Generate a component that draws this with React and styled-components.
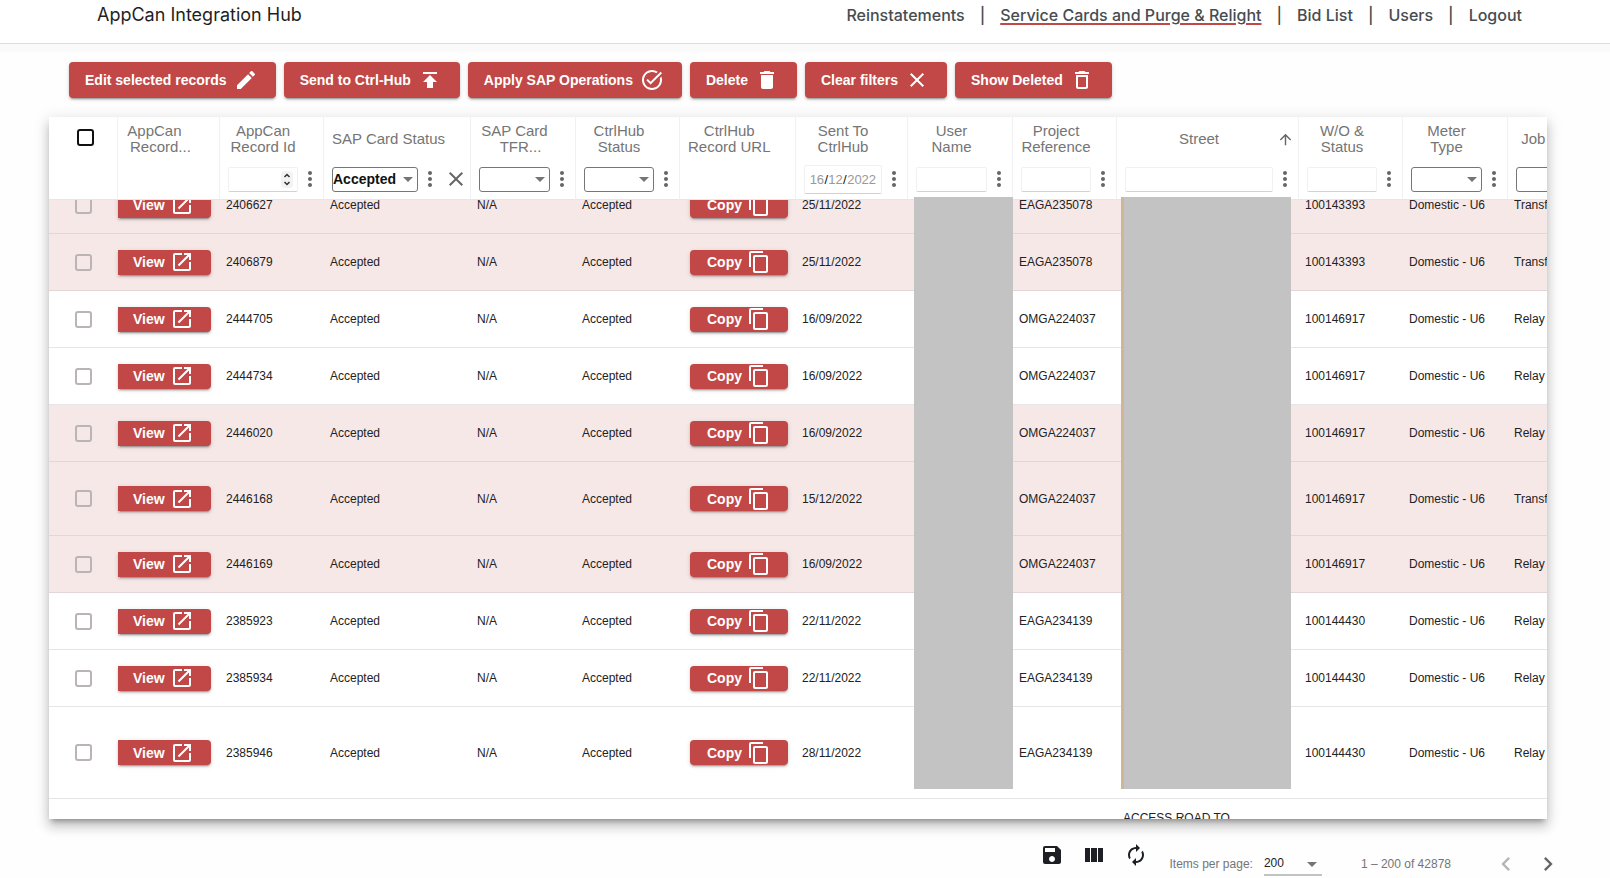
import React, { useLayoutEffect, useRef } from 'react';
import styled, { createGlobalStyle } from 'styled-components';
import {
  MdEdit,
  MdPublish,
  MdTaskAlt,
  MdDelete,
  MdClose,
  MdDeleteOutline,
  MdOpenInNew,
  MdContentCopy,
  MdMoreVert,
  MdArrowUpward,
  MdSave,
  MdAutorenew,
  MdChevronLeft,
  MdChevronRight,
} from 'react-icons/md';

const red = '#c14846';

const GlobalStyle = createGlobalStyle`
  *, *::before, *::after { box-sizing: border-box; }
  body {
    margin: 0;
    background: #fff;
    color: #222;
    font-family: "Liberation Sans", Arial, sans-serif;
    font-size: 12px;
  }
  button, input, select { font-family: inherit; margin: 0; }
`;

const Page = styled.div`
  display: flex;
  flex-direction: column;
  height: 100vh;
  min-height: 480px;
  background: #fefefe;
`;

const TopBar = styled.header`
  display: flex;
  justify-content: space-between;
  align-items: flex-start;
  height: 44px;
  flex: none;
  padding: 4px 88px 0 97px;
  background: #fff;
  border-bottom: 1px solid #dcdcdc;
  box-shadow: 0 8px 0 #fafafa;
  font-family: Inter, "Liberation Sans", sans-serif;
  line-height: 22px;
`;

const Brand = styled.h1`
  margin: 0;
  font-size: 18px;
  font-weight: 400;
  color: #1f1f1f;
`;

const Nav = styled.nav`
  display: flex;
  gap: 15px;
  font-size: 16px;
  font-weight: 500;
  color: #474c51;
`;

const NavLink = styled.a`
  color: inherit;
  text-decoration: ${(p) => (p.$active ? 'underline' : 'none')};
  text-decoration-color: ${red};
  text-decoration-thickness: 2px;
  text-underline-offset: 2px;
`;

const Toolbar = styled.div`
  display: flex;
  flex: none;
  gap: 8px;
  padding: 18px 69px 19px;
`;

const RaisedButton = styled.button`
  display: flex;
  align-items: center;
  border: 0;
  background: ${red};
  color: #fff;
  font-size: 14px;
  font-weight: 700;
  white-space: nowrap;
  box-shadow: 0 3px 1px -2px rgba(0, 0, 0, 0.2), 0 2px 2px rgba(0, 0, 0, 0.14),
    0 1px 5px rgba(0, 0, 0, 0.12);
  svg { width: 24px; height: 24px; flex: none; }
`;

const ToolButton = styled(RaisedButton)`
  height: 36px;
  gap: 7px;
  padding: 0 18px 0 16px;
  border-radius: 4px;
`;

const RowButton = styled(RaisedButton)`
  height: 25px;
  width: ${(p) => (p.$flush ? 93 : 98)}px;
  gap: 5px;
  padding: 0 0 0 ${(p) => (p.$flush ? 15 : 17)}px;
  border-radius: ${(p) => (p.$flush ? '0 4px 4px 0' : '4px')};
`;

const Card = styled.section`
  position: relative;
  flex: 1;
  min-height: 0;
  margin: 0 63px 0 49px;
  background: #fff;
  box-shadow: 0 5px 5px -3px rgba(0, 0, 0, 0.3), 0 8px 10px 1px rgba(0, 0, 0, 0.14),
    0 3px 14px 2px rgba(0, 0, 0, 0.1);
`;

const Scroller = styled.div`
  height: 100%;
  overflow: auto;
  scrollbar-width: none;
`;

const Table = styled.table`
  width: 100%;
  min-width: 1564px;
  table-layout: fixed;
  border-collapse: separate;
  border-spacing: 0;
`;

const HeadCell = styled.th`
  position: sticky;
  top: 0;
  z-index: 1;
  height: 83px;
  padding: 6px 1px 0 ${(p) => (p.$flush ? 0 : 8)}px;
  vertical-align: top;
  background: #fff;
  border-right: 1px solid #f1f1f4;
  border-bottom: 1px solid #ebe4e6;
  font-weight: 400;
`;

const TitleRow = styled.div`
  display: flex;
  align-items: center;
  height: 32px;
`;

const Title = styled.span`
  flex: 1;
  color: #757575;
  font-size: 15px;
  line-height: 16px;
  text-align: center;
  white-space: nowrap;
`;

const TitleLine = styled.span`
  display: block;
  padding-left: ${(p) => (p.$cut ? 12 : 0)}px;
`;

const SortSlot = styled.span`
  display: flex;
  justify-content: center;
  width: ${(p) => (p.$wide ? 30 : 24)}px;
  flex: none;
  color: #666;
`;

const FilterRow = styled.div`
  display: flex;
  align-items: center;
  height: 30px;
  margin-top: 9px;
`;

const Field = styled.div`
  position: relative;
  flex: 1;
  min-width: 0;
`;

const fieldFrame = `
  display: block;
  width: 100%;
  height: 25px;
  border: 1px solid #f1f1f1;
  border-bottom: 1px solid #d2d2d2;
  border-radius: 2px;
  background: #fff;
  outline: none;
`;

const TextInput = styled.input`
  ${fieldFrame}
  padding: 0 4px;
  appearance: textfield;
`;

const Select = styled.select`
  display: block;
  width: 100%;
  height: 25px;
  padding: 0;
  appearance: none;
  border: 1px solid #767676;
  border-radius: 3px;
  background: #fff;
  color: #111;
  font-size: 14px;
  font-weight: 700;
`;

const SelectArrow = styled.svg`
  position: absolute;
  right: 5px;
  top: 10px;
  width: 10px;
  height: 6px;
  pointer-events: none;
  fill: #757575;
`;

const Spinner = styled.svg`
  position: absolute;
  right: 5px;
  top: 4px;
  width: 12px;
  height: 17px;
  pointer-events: none;
`;

const DateBox = styled.div`
  ${fieldFrame}
  display: flex;
  align-items: center;
  justify-content: center;
  height: 29px;
  font-size: 13px;
  color: #111;
`;

const DatePart = styled.input`
  width: ${(p) => (p.$year ? 30 : 15)}px;
  padding: 0;
  border: 0;
  background: none;
  font-size: 13px;
  text-align: center;
  color: #999;
  outline: none;
  &::placeholder { color: #999; opacity: 1; }
`;

const IconButton = styled.button`
  display: flex;
  align-items: center;
  justify-content: center;
  flex: none;
  width: ${(p) => p.$width || 24}px;
  height: ${(p) => p.$size || 24}px;
  padding: 0;
  border: 0;
  background: none;
  color: ${(p) => p.$color || '#666'};
  svg { flex: none; width: ${(p) => p.$size || 24}px; height: ${(p) => p.$size || 24}px; }
`;

const CheckBox = styled.input`
  display: block;
  appearance: none;
  width: 17px;
  height: 17px;
  margin: ${(p) => (p.$head ? '6px 0 0 20px' : '0 0 0 20px')};
  border: 2px solid ${(p) => (p.$head ? '#111' : '#bab4b5')};
  border-radius: 3px;
`;

const Row = styled.tr`
  height: ${(p) => p.$height}px;
  background: ${(p) => (p.$tinted ? '#f7e8e8' : '#fff')};
  td { border-bottom: 1px solid ${(p) => (p.$tinted ? '#e3d6d8' : '#e6e4e7')}; }
`;

const Cell = styled.td`
  padding: 0 0 0 ${(p) => (p.$flush ? 0 : p.$button ? 10 : 6)}px;
  font-size: 12px;
  color: #222;
  white-space: nowrap;
  overflow: ${(p) => (p.$button || p.$flush ? 'visible' : 'hidden')};
`;

const StreetCell = styled(Cell)`
  padding-top: 11px;
  vertical-align: top;
  line-height: 16px;
`;

const Redaction = styled.div`
  position: absolute;
  z-index: 2;
  top: 80px;
  bottom: 30px;
  left: ${(p) => p.$left}px;
  width: ${(p) => p.$width}px;
  background: #c3c3c3;
  border-left: ${(p) => p.$edge}px solid #cdb796;
`;

const Footer = styled.footer`
  display: flex;
  justify-content: flex-end;
  align-items: flex-start;
  flex: none;
  height: 59px;
  padding: 24px 48px 0 49px;
`;

const FooterTools = styled.div`
  display: flex;
  gap: 18px;
  margin-right: 22px;
`;

const Pager = styled.div`
  display: flex;
  align-items: center;
  height: 28px;
  margin-top: 7px;
  color: #757575;
`;

const PageSize = styled.div`
  position: relative;
  width: 58px;
  margin: 0 39px 0 11px;
`;

const PageSelect = styled.select`
  display: block;
  width: 100%;
  height: 24px;
  padding: 0;
  appearance: none;
  border: 0;
  border-bottom: 2px solid #c2c2c2;
  background: none;
  color: #222;
  font-size: 12px;
`;

const PagerButtons = styled.div`
  display: flex;
  gap: 14px;
  margin-left: 41px;
`;

const Arrow = () => (
  <SelectArrow viewBox="0 0 10 6">
    <path d="M0 0h10L5 5z" />
  </SelectArrow>
);

const ColumnsIcon = () => (
  <svg viewBox="0 0 24 24" fill="currentColor">
    <path d="M3 5h5v14H3zM9 5h6v14H9zM16 5h5v14h-5z" />
  </svg>
);

const columns = [
  { width: 102, lines: ['AppCan', 'Record...'], cut: true, flush: true },
  { width: 104, lines: ['AppCan', 'Record Id'], filter: 'number' },
  { width: 147, lines: ['SAP Card Status'], filter: 'select', value: 'Accepted' },
  { width: 105, lines: ['SAP Card', 'TFR...'], cut: true, filter: 'select' },
  { width: 104, lines: ['CtrlHub', 'Status'], filter: 'select' },
  { width: 116, lines: ['CtrlHub', 'Record URL'] },
  { width: 112, lines: ['Sent To', 'CtrlHub'], filter: 'date' },
  { width: 105, lines: ['User', 'Name'], filter: 'text' },
  { width: 104, lines: ['Project', 'Reference'], filter: 'text' },
  { width: 182, lines: ['Street'], filter: 'text', sorted: true },
  { width: 104, lines: ['W/O &', 'Status'], filter: 'text' },
  { width: 105, lines: ['Meter', 'Type'], filter: 'select' },
  { width: 105, lines: ['Job Type'], filter: 'select' },
];

const records = [
  ['2406627', '25/11/2022', 'EAGA235078', '100143393', 'Transfer', 57, true],
  ['2406879', '25/11/2022', 'EAGA235078', '100143393', 'Transfer', 57, true],
  ['2444705', '16/09/2022', 'OMGA224037', '100146917', 'Relay', 57, false],
  ['2444734', '16/09/2022', 'OMGA224037', '100146917', 'Relay', 57, false],
  ['2446020', '16/09/2022', 'OMGA224037', '100146917', 'Relay', 57, true],
  ['2446168', '15/12/2022', 'OMGA224037', '100146917', 'Transfer', 74, true],
  ['2446169', '16/09/2022', 'OMGA224037', '100146917', 'Relay', 57, true],
  ['2385923', '22/11/2022', 'EAGA234139', '100144430', 'Relay', 57, false],
  ['2385934', '22/11/2022', 'EAGA234139', '100144430', 'Relay', 57, false],
  ['2385946', '28/11/2022', 'EAGA234139', '100144430', 'Relay', 92, false],
];

function Filter({ column }) {
  const name = column.lines.join(' ');
  const label = `Filter ${name}`;
  return (
    <FilterRow>
      <Field>
        {column.filter === 'select' && (
          <>
            <Select aria-label={label} defaultValue={column.value || ''}>
              <option value="" />
              <option value="Accepted">Accepted</option>
            </Select>
            <Arrow />
          </>
        )}
        {column.filter === 'text' && <TextInput type="text" aria-label={label} />}
        {column.filter === 'number' && (
          <>
            <TextInput type="number" aria-label={label} />
            <Spinner viewBox="0 0 12 17">
              <rect width="12" height="17" rx="4" fill="#f3f3f3" />
              <path d="M3.500 6L6 3.500 8.500 6M3.500 11L6 13.500 8.500 11" fill="none" stroke="#333" strokeWidth="1.500" />
            </Spinner>
          </>
        )}
        {column.filter === 'date' && (
          <DateBox role="group" aria-label={label}>
            <DatePart aria-label="Day" placeholder="16" />/
            <DatePart aria-label="Month" placeholder="12" />/
            <DatePart aria-label="Year" placeholder="2022" $year />
          </DateBox>
        )}
      </Field>
      <IconButton aria-label={`${name} filter options`}>
        <MdMoreVert />
      </IconButton>
      {column.value && (
        <IconButton $width={27} aria-label={`Clear ${name} filter`}>
          <MdClose />
        </IconButton>
      )}
    </FilterRow>
  );
}

function RecordRow({ record }) {
  const [id, sent, project, workOrder, job, height, tinted] = record;
  return (
    <Row $height={height} $tinted={tinted}>
      <Cell>
        <CheckBox type="checkbox" aria-label={`Select record ${id}`} />
      </Cell>
      <Cell $flush>
        <RowButton $flush>
          View
          <MdOpenInNew />
        </RowButton>
      </Cell>
      <Cell>{id}</Cell>
      <Cell>Accepted</Cell>
      <Cell>N/A</Cell>
      <Cell>Accepted</Cell>
      <Cell $button>
        <RowButton>
          Copy
          <MdContentCopy />
        </RowButton>
      </Cell>
      <Cell>{sent}</Cell>
      <Cell />
      <Cell>{project}</Cell>
      <Cell />
      <Cell>{workOrder}</Cell>
      <Cell>Domestic - U6</Cell>
      <Cell>{job}</Cell>
    </Row>
  );
}

export default function App() {
  const scroller = useRef(null);

  // Open the list part-way into its first record.
  useLayoutEffect(() => {
    scroller.current.scrollTop = 23;
  }, []);

  return (
    <>
      <GlobalStyle />
      <Page>
        <TopBar>
          <Brand>AppCan Integration Hub</Brand>
          <Nav>
            <NavLink href="#reinstatements">Reinstatements</NavLink>
            <span>|</span>
            <NavLink href="#service-cards" $active>
              Service Cards and Purge &amp; Relight
            </NavLink>
            <span>|</span>
            <NavLink href="#bid-list">Bid List</NavLink>
            <span>|</span>
            <NavLink href="#users">Users</NavLink>
            <span>|</span>
            <NavLink href="#logout">Logout</NavLink>
          </Nav>
        </TopBar>

        <Toolbar>
          <ToolButton>Edit selected records<MdEdit /></ToolButton>
          <ToolButton>Send to Ctrl-Hub<MdPublish /></ToolButton>
          <ToolButton>Apply SAP Operations<MdTaskAlt /></ToolButton>
          <ToolButton>Delete<MdDelete /></ToolButton>
          <ToolButton>Clear filters<MdClose /></ToolButton>
          <ToolButton>Show Deleted<MdDeleteOutline /></ToolButton>
        </Toolbar>

        <Card>
          <Scroller ref={scroller}>
            <Table>
              <colgroup>
                <col width={69} />
                {columns.map((c) => (
                  <col key={c.lines.join()} width={c.width} />
                ))}
              </colgroup>
              <thead>
                <tr>
                  <HeadCell>
                    <CheckBox $head type="checkbox" aria-label="Select all records" />
                  </HeadCell>
                  {columns.map((c) => (
                    <HeadCell key={c.lines.join()} $flush={c.flush}>
                      <TitleRow>
                        <Title>
                          {c.lines.map((line, i) => (
                            <TitleLine key={line} $cut={c.cut && i === 1}>
                              {line}
                            </TitleLine>
                          ))}
                        </Title>
                        <SortSlot $wide={c.flush}>
                          {c.sorted && <MdArrowUpward size={17} />}
                        </SortSlot>
                      </TitleRow>
                      {c.filter && <Filter column={c} />}
                    </HeadCell>
                  ))}
                </tr>
              </thead>
              <tbody>
                {records.map((record) => (
                  <RecordRow key={record[0]} record={record} />
                ))}
                <Row $height={92}>
                  <Cell colSpan={10} />
                  <StreetCell>ACCESS ROAD TO</StreetCell>
                  <Cell colSpan={3} />
                </Row>
              </tbody>
            </Table>
          </Scroller>
          <Redaction $left={865} $width={99} $edge={0} />
          <Redaction $left={1072} $width={170} $edge={3} />
        </Card>

        <Footer>
          <FooterTools>
            <IconButton $color="#1c1f24" aria-label="Save view"><MdSave /></IconButton>
            <IconButton $color="#1c1f24" aria-label="Choose columns"><ColumnsIcon /></IconButton>
            <IconButton $color="#1c1f24" aria-label="Refresh"><MdAutorenew /></IconButton>
          </FooterTools>
          <Pager>
            <label htmlFor="page-size">Items per page:</label>
            <PageSize>
              <PageSelect id="page-size" defaultValue="200">
                <option>100</option>
                <option>200</option>
              </PageSelect>
              <Arrow />
            </PageSize>
            <span>1 – 200 of 42878</span>
            <PagerButtons>
              <IconButton $width={28} $size={28} $color="#b5b5b5" aria-label="Previous page">
                <MdChevronLeft />
              </IconButton>
              <IconButton $width={28} $size={28} aria-label="Next page">
                <MdChevronRight />
              </IconButton>
            </PagerButtons>
          </Pager>
        </Footer>
      </Page>
    </>
  );
}
